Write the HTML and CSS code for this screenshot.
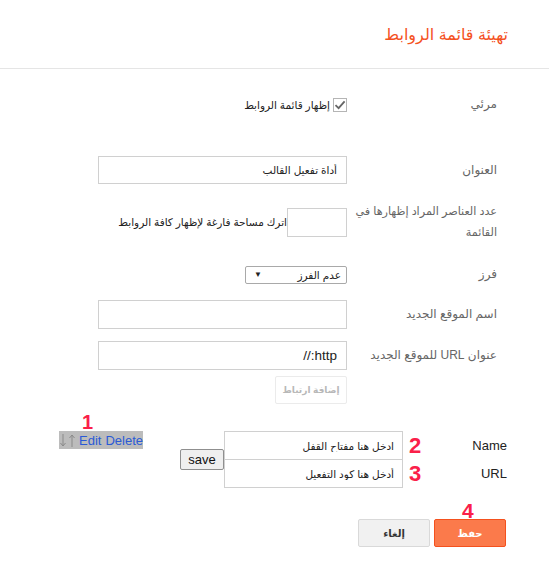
FILE: index.html
```html
<!DOCTYPE html>
<html lang="ar" dir="rtl">
<head>
    <meta charset="UTF-8">
    <meta name="viewport" content="width=device-width, initial-scale=1.0">
    <title>تهيئة قائمة الروابط</title>
    <link rel="stylesheet" href="styles.css">
</head>
<body>
    <header class="top">
        <h2>تهيئة قائمة الروابط</h2>
    </header>

    <form class="settings">
        <div class="row row-visible">
            <span class="row-label">مرئي</span>
            <div class="field">
                <label class="check">
                    <span class="box">
                        <svg width="12" height="12" viewBox="0 0 12 12"><path d="M1.5 6.2 L4.6 9.2 L10.6 2.4" fill="none" stroke="#666" stroke-width="1.8"/></svg>
                    </span>
                    <span>إظهار قائمة الروابط</span>
                </label>
            </div>
        </div>

        <div class="row row-title">
            <label class="row-label" for="title">العنوان</label>
            <div class="field">
                <input type="text" id="title" class="text-input" value="أداة تفعيل القالب">
            </div>
        </div>

        <div class="row row-count">
            <label class="row-label long" for="count">عدد العناصر المراد إظهارها في<br>القائمة</label>
            <div class="field field-inline">
                <input type="text" id="count" class="text-input small">
                <span class="hint">اترك مساحة فارغة لإظهار كافة الروابط</span>
            </div>
        </div>

        <div class="row row-sort">
            <span class="row-label">فرز</span>
            <div class="field">
                <div class="select">
                    <span>عدم الفرز</span>
                    <span class="arrow">▼</span>
                </div>
            </div>
        </div>

        <div class="row row-name">
            <label class="row-label" for="siteName">اسم الموقع الجديد</label>
            <div class="field">
                <input type="text" id="siteName" class="text-input">
            </div>
        </div>

        <div class="row row-url">
            <label class="row-label" for="siteUrl">عنوان URL للموقع الجديد</label>
            <div class="field">
                <input type="text" id="siteUrl" class="text-input url" value="http://">
            </div>
        </div>

        <div class="row row-add">
            <span></span>
            <div class="field">
                <button type="button" class="add-link" disabled>إضافة ارتباط</button>
            </div>
        </div>

        <!-- link editor -->
        <div class="editor" dir="ltr">
            <div class="links">
                <span class="mark mark-1">1</span>
                <span class="arrows">
                    <svg width="6" height="13" viewBox="0 0 6 13"><path d="M3 0 V12 M0.5 9 L3 12 L5.5 9" fill="none" stroke="#8a8a8a" stroke-width="1"/></svg>
                    <svg width="6" height="13" viewBox="0 0 6 13"><path d="M3 13 V1 M0.5 4 L3 1 L5.5 4" fill="none" stroke="#8a8a8a" stroke-width="1"/></svg>
                </span>
                <a href="#">Edit</a> <a href="#">Delete</a>
            </div>
            <button type="button" class="save-small">save</button>
            <div class="pairs">
                <input type="text" class="text-input pair" dir="rtl" value="ادخل هنا مفتاح القفل">
                <input type="text" class="text-input pair" dir="rtl" value="أدخل هنا كود التفعيل">
            </div>
            <div class="nums">
                <span class="mark">2</span>
                <span class="mark">3</span>
            </div>
            <div class="names">
                <span>Name</span>
                <span>URL</span>
            </div>
        </div>

        <div class="actions">
            <button type="submit" class="btn btn-save">حفظ<span class="mark mark-4">4</span></button>
            <button type="button" class="btn btn-cancel">إلغاء</button>
        </div>
    </form>
</body>
</html>
```

FILE: styles.css
```css
/* Base */
body {
    margin: 0;
    font-family: "Liberation Sans", "DejaVu Sans", Arial, sans-serif;
    background: #fff;
    color: #222;
}

.top {
    height: 68px;
    display: flex;
    align-items: center;
    padding-right: 41px;
    border-bottom: 1px solid #e5e5e5;
}

.top h2 {
    margin: 0;
    font-size: 16px;
    font-weight: normal;
    color: #f4511e;
}

/* Settings rows */
.settings {
    padding-right: 52px;
}

.row {
    display: grid;
    grid-template-columns: 150px 249px;
    align-items: center;
}

.row-label {
    font-size: 12px;
    line-height: 21px;
    color: #666;
}

.row-label.long {
    font-size: 11.2px;
    white-space: nowrap;
}

.row-visible { margin-top: 25px; }
.row-title { margin-top: 41px; }
.row-count { margin-top: 17px; }
.row-sort { margin-top: 21px; }
.row-name { margin-top: 15px; }
.row-url { margin-top: 12px; }
.row-add { margin-top: 6px; }

.field-inline {
    display: flex;
    align-items: center;
}

.check {
    display: flex;
    align-items: center;
    gap: 3px;
    font-size: 10.5px;
    color: #222;
}

.check .box {
    width: 12px;
    height: 12px;
    border: 1px solid #b5b5b5;
    display: flex;
    align-items: center;
    justify-content: center;
}

.text-input {
    display: block;
    box-sizing: border-box;
    width: 100%;
    height: 28px;
    padding: 0 9px;
    border: 1px solid #d0d0d0;
    font-family: inherit;
    font-size: 10.5px;
    color: #222;
    direction: rtl;
    outline: none;
}

.text-input.small {
    width: 60px;
    height: 29px;
}

.text-input.url {
    font-size: 13.5px;
}

.row-name .text-input,
.row-url .text-input {
    height: 29px;
}

.hint {
    font-size: 10.5px;
    color: #222;
    white-space: nowrap;
}

.select {
    box-sizing: border-box;
    width: 102px;
    height: 18px;
    border: 1px solid #a9a9a9;
    border-radius: 2px;
    display: flex;
    justify-content: space-between;
    align-items: center;
    padding: 0 5px 0 8px;
    font-size: 10.5px;
}

.select .arrow {
    font-size: 8px;
    color: #222;
}

.add-link {
    width: 72px;
    height: 28px;
    padding: 0;
    background: #fff;
    border: 1px solid #ebebeb;
    border-radius: 2px;
    color: #b8b8b8;
    font-family: inherit;
    font-size: 9px;
    font-weight: bold;
    white-space: nowrap;
}

/* Link editor */
.editor {
    display: flex;
    align-items: flex-start;
    margin: 27px -52px 0 0;
    padding: 0 42px 0 59px;
}

.links {
    position: relative;
    box-sizing: border-box;
    width: 84px;
    height: 18px;
    display: flex;
    align-items: center;
    gap: 4px;
    background: #bcbcbc;
    font-size: 13px;
    white-space: nowrap;
}

.links .arrows {
    display: flex;
    gap: 3px;
    padding-left: 1px;
}

.links a {
    color: #2a5ad6;
    text-decoration: none;
}

.save-small {
    margin: 18px 0 0 37px;
    box-sizing: border-box;
    width: 44px;
    height: 21px;
    padding: 0;
    background: #efefef;
    border: 1px solid #8f8f8f;
    border-radius: 2px;
    font-family: inherit;
    font-size: 13px;
    color: #111;
}

.pairs {
    width: 179px;
}

.text-input.pair {
    height: 29px;
    padding-right: 8px;
}

.text-input.pair + .text-input.pair {
    margin-top: -1px;
}

.nums,
.names {
    display: flex;
    flex-direction: column;
}

.nums {
    margin-left: 6px;
}

.nums span,
.names span {
    height: 28px;
    line-height: 29px;
}

.names {
    flex: 1;
    align-items: flex-end;
    font-size: 13px;
    color: #222;
}

.mark {
    color: #fa2049;
    font-weight: bold;
    font-size: 22px;
}

.mark-1 {
    position: absolute;
    left: 23px;
    bottom: 100%;
    font-size: 20px;
    line-height: 18px;
}

/* Footer buttons */
.actions {
    display: flex;
    gap: 4px;
    margin: 31px -52px 0 0;
    padding-right: 43px;
}

.btn {
    position: relative;
    width: 72px;
    height: 28px;
    border-radius: 2px;
    font-family: inherit;
    font-size: 10px;
    font-weight: bold;
}

.btn-save {
    background: #fb7a4b;
    border: 1px solid #f4511e;
    color: #fff;
}

.btn-cancel {
    background: #f1f1f1;
    border: 1px solid #d9d9d9;
    color: #333;
}

.mark-4 {
    position: absolute;
    left: 27px;
    bottom: 100%;
    font-size: 21px;
    line-height: 18px;
}
```
